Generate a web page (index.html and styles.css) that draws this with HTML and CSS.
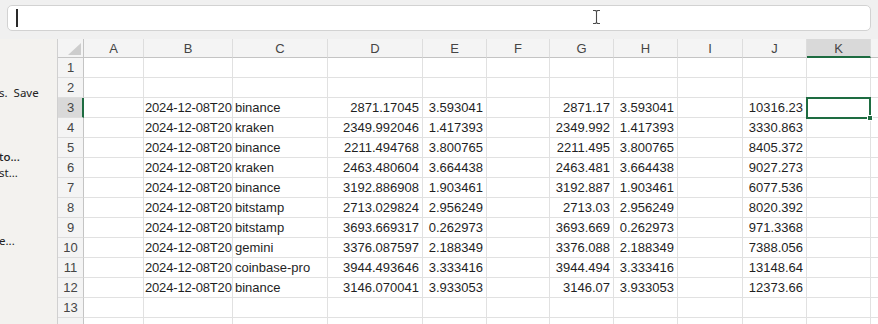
FILE: index.html
```html
<!DOCTYPE html>
<html lang="en">
<head>
    <meta charset="UTF-8">
    <title>Sheet</title>
    <link rel="stylesheet" href="styles.css">
</head>
<body>
    <div class="toolbar">
        <div class="formula">
            <span class="caret"></span>
            <svg class="ibeam" width="9" height="16" viewBox="0 0 9 16">
                <path d="M1 1.5h2.5l1 1 1-1H8M4.5 2.5v11M1 14.5h2.5l1-1 1 1H8" fill="none" stroke="#fff" stroke-width="2.6"/>
                <path d="M1 1.5h2.5l1 1 1-1H8M4.5 2.5v11M1 14.5h2.5l1-1 1 1H8" fill="none" stroke="#4a4a4a" stroke-width="1.1"/>
            </svg>
        </div>
    </div>

    <div class="workspace">
        <div class="side-panel">
            <p class="first">s.&nbsp; Save</p>
            <p class="gap-1 strong">to...</p>
            <p>st...</p>
            <p class="gap-2">e...</p>
        </div>
        <div class="sheet" id="sheet"></div>
    </div>

    <script>
        const columns = ['A', 'B', 'C', 'D', 'E', 'F', 'G', 'H', 'I', 'J', 'K', 'L'];

        // rows 3..12, columns B..J
        const data = [
            ['2024-12-08T20', 'binance', '2871.17045', '3.593041', '', '2871.17', '3.593041', '', '10316.23'],
            ['2024-12-08T20', 'kraken', '2349.992046', '1.417393', '', '2349.992', '1.417393', '', '3330.863'],
            ['2024-12-08T20', 'binance', '2211.494768', '3.800765', '', '2211.495', '3.800765', '', '8405.372'],
            ['2024-12-08T20', 'kraken', '2463.480604', '3.664438', '', '2463.481', '3.664438', '', '9027.273'],
            ['2024-12-08T20', 'binance', '3192.886908', '1.903461', '', '3192.887', '1.903461', '', '6077.536'],
            ['2024-12-08T20', 'bitstamp', '2713.029824', '2.956249', '', '2713.03', '2.956249', '', '8020.392'],
            ['2024-12-08T20', 'bitstamp', '3693.669317', '0.262973', '', '3693.669', '0.262973', '', '971.3368'],
            ['2024-12-08T20', 'gemini', '3376.087597', '2.188349', '', '3376.088', '2.188349', '', '7388.056'],
            ['2024-12-08T20', 'coinbase-pro', '3944.493646', '3.333416', '', '3944.494', '3.333416', '', '13148.64'],
            ['2024-12-08T20', 'binance', '3146.070041', '3.933053', '', '3146.07', '3.933053', '', '12373.66']
        ];

        const activeRow = 3;
        const activeCol = 'K';
        const lastRow = 14; // only its top edge is in view

        function makeCell(className, text) {
            const div = document.createElement('div');
            div.className = className;
            if (text) div.textContent = text;
            return div;
        }

        function renderSheet() {
            const sheet = document.getElementById('sheet');

            sheet.appendChild(makeCell('corner'));
            columns.forEach(col => {
                const cls = col === activeCol ? 'col-head selected' : 'col-head';
                // column L is cut by the window edge, its letter is out of view
                sheet.appendChild(makeCell(cls, col === 'L' ? '' : col));
            });

            for (let r = 1; r <= lastRow; r++) {
                const cls = r === activeRow ? 'row-head selected' : 'row-head';
                sheet.appendChild(makeCell(cls, r === lastRow ? '' : String(r)));

                const values = data[r - 3] || [];
                columns.forEach((col, i) => {
                    const value = i >= 1 ? values[i - 1] : '';
                    const isNum = value && /^[\d.]+$/.test(value);
                    let cls = isNum ? 'cell num' : 'cell';
                    if (col === 'B') cls += ' stamp';
                    const cell = makeCell(cls, value);

                    if (r === activeRow && col === activeCol) {
                        cell.classList.add('active');
                        const sel = makeCell('selection');
                        sel.appendChild(makeCell('handle'));
                        cell.appendChild(sel);
                    }
                    sheet.appendChild(cell);
                });
            }
        }

        renderSheet();
    </script>
</body>
</html>
```

FILE: styles.css
```css
:root {
    --top-bg: #f0f0f0;
    --panel-bg: #f3f2ef;
    --head-bg: #f4f4f4;
    --head-selected: #d9d9d9;
    --head-line: #c4c4c4;
    --grid-line: #e1e1e1;
    --accent: #1e6c41;
    --text-color: #1f1f1f;
    --head-text: #454545;
}

* {
    box-sizing: border-box;
    margin: 0;
    padding: 0;
}

body {
    width: 878px;
    height: 324px;
    overflow: hidden;
    background-color: var(--top-bg);
    font-family: "Liberation Sans", Arial, sans-serif;
    color: var(--text-color);
}

.toolbar {
    height: 39px;
    padding: 5px 7px 0 7px;
}

.formula {
    position: relative;
    display: flex;
    align-items: center;
    height: 26px;
    padding-left: 8px;
    background: #ffffff;
    border: 1px solid #d2d2d2;
    border-radius: 5px;
}

.caret {
    width: 2px;
    height: 18px;
    background-color: #2a2a2a;
}

.ibeam {
    position: absolute;
    left: 584px;
    top: 3px;
}

.workspace {
    display: flex;
    height: 285px;
}

.side-panel {
    width: 58px;
    flex-shrink: 0;
    overflow: hidden;
    background-color: var(--panel-bg);
    border-right: 1px solid #d0d0d0;
    font-family: "Noto Sans", "Open Sans", sans-serif;
    font-size: 11.5px;
    line-height: 16px;
    color: #222;
    white-space: nowrap;
    padding-top: 46px;
}

.side-panel p {
    margin-left: -1px;
}

.side-panel .gap-1 {
    margin-top: 48px;
}

.side-panel .gap-2 {
    margin-top: 52px;
}

.side-panel .strong {
    font-weight: 500;
}

.sheet {
    flex: 1;
    display: grid;
    grid-template-columns: 26px 60px 89px 95px 95px 64px 63px 64px 64px 65px 64px 64px 64px;
    grid-template-rows: 19px;
    grid-auto-rows: 20px;
    background: #ffffff;
    overflow: hidden;
    align-content: start;
}

.corner {
    display: flex;
    justify-content: flex-end;
    align-items: flex-end;
    padding: 0 2px 2px 0;
    background-color: var(--head-bg);
    border-right: 1px solid var(--head-line);
    border-bottom: 1px solid var(--head-line);
}

.corner::after {
    content: "";
    width: 0;
    height: 0;
    border-left: 13px solid transparent;
    border-bottom: 12px solid #cdcdcd;
}

.col-head,
.row-head {
    display: flex;
    align-items: center;
    justify-content: center;
    background-color: var(--head-bg);
    color: var(--head-text);
    font-size: 13px;
}

.col-head {
    border-right: 1px solid #dddddd;
    border-bottom: 1px solid var(--head-line);
    padding-top: 1px;
}

.col-head.selected {
    background-color: var(--head-selected);
    border-bottom: 2px solid var(--accent);
    padding-top: 2px;
}

.row-head {
    border-right: 1px solid var(--head-line);
    border-bottom: 1px solid #dddddd;
}

.row-head.selected {
    background-color: var(--head-selected);
    border-right: 2px solid var(--accent);
    padding-left: 1px;
}

.cell {
    display: flex;
    align-items: flex-end;
    padding: 0 3px 2px 2px;
    font-size: 13px;
    line-height: 15px;
    white-space: nowrap;
    overflow: hidden;
    border-right: 1px solid var(--grid-line);
    border-bottom: 1px solid var(--grid-line);
}

.cell.num {
    justify-content: flex-end;
}

.cell.stamp {
    padding-left: 1px;
    padding-right: 0;
    letter-spacing: -0.17px;
}

.cell.active {
    position: relative;
    overflow: visible;
}

.selection {
    position: absolute;
    left: -1px;
    top: -1px;
    width: 65px;
    height: 22px;
    border: 2px solid var(--accent);
}

.handle {
    position: absolute;
    right: -4px;
    bottom: -4px;
    width: 6px;
    height: 6px;
    background-color: var(--accent);
    border: 1px solid #ffffff;
}
```
